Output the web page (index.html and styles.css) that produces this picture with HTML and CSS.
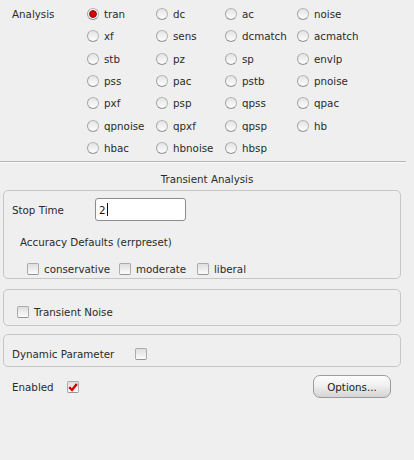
FILE: index.html
```html
<!DOCTYPE html>
<html>
<head>
<meta charset="utf-8">
<link rel="stylesheet" href="styles.css">
</head>
<body>
<div class="analysis">
  <div class="alabel">Analysis</div>
  <div class="radios">
    <label class="radio"><span class="dot on"></span>tran</label>
    <label class="radio"><span class="dot"></span>dc</label>
    <label class="radio"><span class="dot"></span>ac</label>
    <label class="radio"><span class="dot"></span>noise</label>
    <label class="radio"><span class="dot"></span>xf</label>
    <label class="radio"><span class="dot"></span>sens</label>
    <label class="radio"><span class="dot"></span>dcmatch</label>
    <label class="radio"><span class="dot"></span>acmatch</label>
    <label class="radio"><span class="dot"></span>stb</label>
    <label class="radio"><span class="dot"></span>pz</label>
    <label class="radio"><span class="dot"></span>sp</label>
    <label class="radio"><span class="dot"></span>envlp</label>
    <label class="radio"><span class="dot"></span>pss</label>
    <label class="radio"><span class="dot"></span>pac</label>
    <label class="radio"><span class="dot"></span>pstb</label>
    <label class="radio"><span class="dot"></span>pnoise</label>
    <label class="radio"><span class="dot"></span>pxf</label>
    <label class="radio"><span class="dot"></span>psp</label>
    <label class="radio"><span class="dot"></span>qpss</label>
    <label class="radio"><span class="dot"></span>qpac</label>
    <label class="radio"><span class="dot"></span>qpnoise</label>
    <label class="radio"><span class="dot"></span>qpxf</label>
    <label class="radio"><span class="dot"></span>qpsp</label>
    <label class="radio"><span class="dot"></span>hb</label>
    <label class="radio"><span class="dot"></span>hbac</label>
    <label class="radio"><span class="dot"></span>hbnoise</label>
    <label class="radio"><span class="dot"></span>hbsp</label>
  </div>
</div>
<div class="sep"></div>
<div class="title">Transient Analysis</div>
<div class="group g1">
  <div class="stoprow">
    <span class="stoplabel">Stop Time</span>
    <div class="input">2<span class="caret"></span></div>
  </div>
  <div class="acc">Accuracy Defaults (errpreset)</div>
  <div class="checks">
    <label class="check w1"><span class="box"></span>conservative</label>
    <label class="check w2"><span class="box"></span>moderate</label>
    <label class="check"><span class="box"></span>liberal</label>
  </div>
</div>
<div class="group g2">
  <label class="check"><span class="box"></span>Transient Noise</label>
</div>
<div class="group g3">
  <span class="dynlabel">Dynamic Parameter</span><span class="box"></span>
</div>
<div class="bottom">
  <span class="enlabel">Enabled</span>
  <span class="box checked"><svg width="10" height="10" viewBox="0 0 10 10"><path d="M1.2 5.2 L4 8 L8.8 2" fill="none" stroke="#d40000" stroke-width="2.4" stroke-linejoin="miter"/></svg></span>
  <span class="spacer"></span>
  <button class="btn">Options...</button>
</div>
</body>
</html>
```
FILE: styles.css
```css
html, body {
  margin: 0;
  padding: 0;
  background: #efefef;
}
body {
  font-family: "DejaVu Sans", sans-serif;
  font-size: 10.3px;
  color: #2a2a2a;
  width: 414px;
  height: 460px;
  overflow: hidden;
}
.analysis {
  display: flex;
  padding: 3px 0 0 12px;
}
.alabel {
  width: 75px;
  line-height: 22.3px;
}
.radios {
  display: grid;
  grid-template-columns: 69px 69px 72px auto;
  grid-auto-rows: 22.3px;
}
.radio {
  display: flex;
  align-items: center;
  white-space: nowrap;
}
.dot {
  width: 10px;
  height: 10px;
  border-radius: 50%;
  border: 1px solid #b4b4b4;
  border-bottom-color: #929292;
  border-left-color: #a2a2a2;
  background: linear-gradient(#e4e4e4, #fdfdfd);
  margin-right: 5px;
  flex: none;
  box-sizing: content-box;
}
.dot.on {
  background: radial-gradient(circle, #e00000 0, #c80000 2.6px, #8a0000 3.4px, #f4f4f4 4.2px, #ffffff 6px);
}
.sep {
  height: 1px;
  background: #b4b4b4;
  border-bottom: 1px solid #fafafa;
  margin: 2px 8px 0 0;
}
.title {
  text-align: center;
  line-height: 13px;
  padding: 10px 0 0 0;
  margin-bottom: 4px;
}
.group {
  margin: 0 13px 0 3px;
  border: 1px solid #c6c6c6;
  border-radius: 5px;
}
.g1 {
  padding: 7px 0 2px 8px;
}
.stoprow {
  display: flex;
  align-items: center;
  height: 23px;
}
.stoplabel {
  width: 83px;
}
.input {
  background: #ffffff;
  border: 1px solid #8c8c8c;
  border-radius: 3px;
  display: flex;
  align-items: center;
  padding-left: 3px;
  box-sizing: border-box;
  width: 91px;
  height: 23px;
  color: #111;
}
.caret {
  width: 1px;
  height: 13px;
  background: #111;
  margin-left: 1px;
}
.acc {
  margin-top: 14px;
  line-height: 14px;
  padding-left: 8px;
}
.checks {
  display: flex;
  margin-top: 13px;
  padding-left: 15px;
  height: 14px;
}
.check {
  display: flex;
  align-items: center;
  white-space: nowrap;
  height: 14px;
}
.w1 { width: 92px; }
.w2 { width: 78px; }
.box {
  width: 10px;
  height: 10px;
  border: 1px solid #ababab;
  border-bottom-color: #949494;
  border-radius: 2px;
  background: linear-gradient(#dedede, #fcfcfc);
  margin-right: 5px;
  flex: none;
  display: inline-flex;
  align-items: center;
  justify-content: center;
}
.g2 {
  margin-top: 10px;
  padding: 15px 0 6px 13px;
}
.g3 {
  margin-top: 8px;
  padding: 12px 0 5px 8px;
  display: flex;
  align-items: center;
  height: 14px;
}
.dynlabel {
  width: 123px;
  line-height: 14px;
}
.bottom {
  display: flex;
  align-items: center;
  margin-top: 8px;
  padding: 0 23px 0 12px;
  height: 23px;
}
.enlabel {
  width: 55px;
}
.box.checked svg {
  display: block;
}
.spacer {
  flex: 1;
}
.btn {
  width: 78px;
  height: 23px;
  font-family: "DejaVu Sans", sans-serif;
  font-size: 10.3px;
  color: #222;
  border: 1px solid #9c9c9c;
  border-radius: 7px;
  background: linear-gradient(#fdfdfd 0%, #f0f0f0 45%, #d4d4d4 100%);
  padding: 0;
}
```
